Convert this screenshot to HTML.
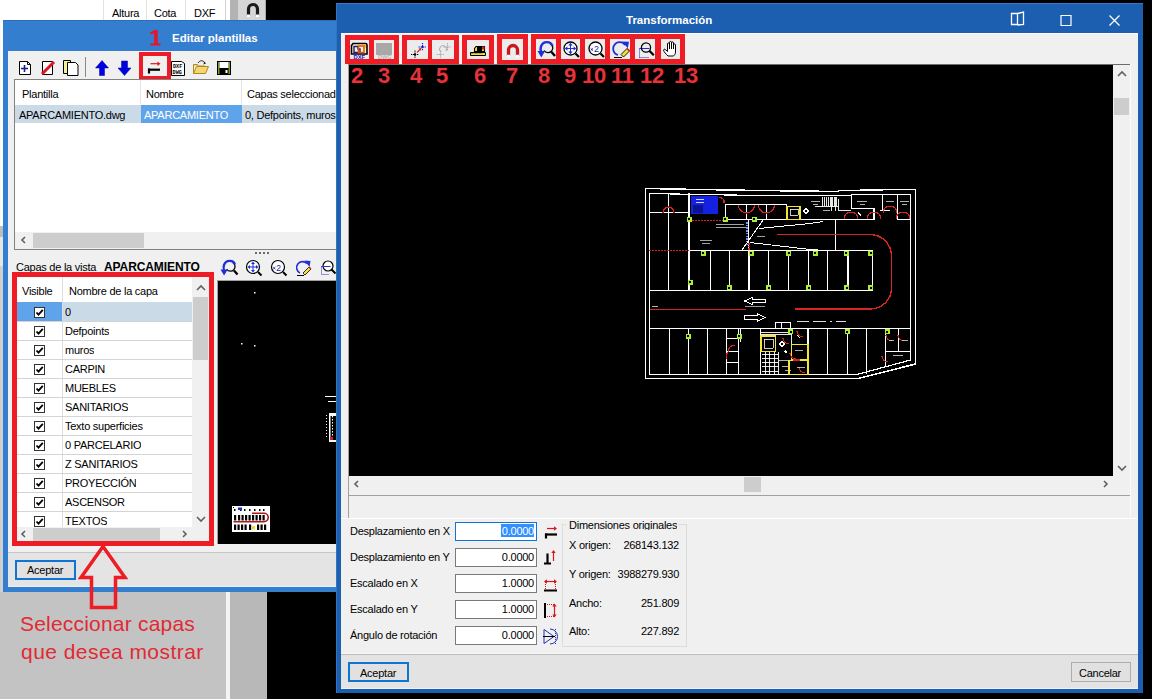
<!DOCTYPE html>
<html><head><meta charset="utf-8">
<style>
*{margin:0;padding:0;box-sizing:border-box}
html,body{width:1152px;height:699px;overflow:hidden;background:#000;font-family:"Liberation Sans",sans-serif;font-size:11px;color:#000}
.a{position:absolute}
.t{position:absolute;white-space:nowrap;line-height:13px;letter-spacing:-0.25px}
</style></head><body>
<!-- ===== background app ===== -->
<div class="a" style="left:0;top:0;width:230px;height:20px;background:#fff"></div>
<div class="a" style="left:103px;top:0;width:1px;height:20px;background:#e3e3e3"></div>
<div class="a" style="left:146px;top:0;width:1px;height:20px;background:#e3e3e3"></div>
<div class="a" style="left:185px;top:0;width:1px;height:20px;background:#e3e3e3"></div>
<div class="a" style="left:225px;top:0;width:1px;height:20px;background:#d0d0d0"></div>
<div class="t" style="left:112px;top:7px">Altura</div>
<div class="t" style="left:154px;top:7px">Cota</div>
<div class="t" style="left:194px;top:7px">DXF</div>
<div class="a" style="left:230px;top:0;width:8px;height:20px;background:#b3b3b3"></div>
<div class="a" style="left:238px;top:0;width:28px;height:20px;background:#d6d6d6;border-right:1px solid #aaa"></div>
<div class="a" style="left:0;top:20px;width:3px;height:206px;background:#fbfbfb"></div>
<div class="a" style="left:0;top:226px;width:3px;height:11px;background:#bdbdbd"></div>
<div class="a" style="left:0;top:237px;width:3px;height:29px;background:#e6e6e6"></div>
<div class="a" style="left:0;top:266px;width:3px;height:326px;background:#cfcfcf"></div>
<div class="a" style="left:0;top:592px;width:226px;height:107px;background:#c3c3c3"></div>
<div class="a" style="left:226px;top:592px;width:4px;height:107px;background:#f4f4f4"></div>
<div class="a" style="left:230px;top:592px;width:37px;height:107px;background:#b8b8b8"></div>

<!-- ===== left window ===== -->
<div class="a" id="lw" style="left:3px;top:20px;width:340px;height:572px;background:#347ecf;border-top:1px solid #2a6cbd"></div>
<div class="a" style="left:8px;top:51px;width:330px;height:536px;background:#f0f0f0"></div>


<!-- left toolbar -->
<svg class="a" style="left:14px;top:54px" width="220" height="26" viewBox="0 0 220 26">
 <!-- new doc + -->
 <path d="M5.5 7.5h8l3 3v10h-11z" fill="#fff" stroke="#000"/>
 <path d="M13.5 7.5v3h3" fill="none" stroke="#000"/>
 <path d="M7 14.5h7M10.5 11v7" stroke="#1a1a8c" stroke-width="1.6"/>
 <!-- doc w red -->
 <path d="M28.5 7.5h10v13h-10z" fill="#fff" stroke="#000"/>
 <path d="M28 20L40 8" stroke="#e0141c" stroke-width="3"/>
 <!-- copy -->
 <path d="M49.5 6.5h7v13h-7z" fill="#f4f09a" stroke="#000"/>
 <path d="M53.5 8.5h8l2.5 2.5v10.5h-10.5z" fill="#fff" stroke="#000"/>
 <!-- sep -->
 <path d="M71.5 3v20" stroke="#888"/>
 <!-- up arrow -->
 <path d="M88 6.5L94.5 14h-4v7.5h-5V14h-4z" fill="#0000e0" stroke="#0000a0" stroke-width=".5"/>
 <!-- down arrow -->
 <path d="M107.5 7h6v7h3.5l-6.5 7.5L104 14h3.5z" fill="#0000e0" stroke="#0000a0" stroke-width=".5"/>
 <!-- dxf dwg -->
 <path d="M157.5 7.5h10l3 2v12h-13z" fill="#fff" stroke="#000"/>
 <text x="159" y="13.6" font-size="5.2" font-weight="bold" font-family="Liberation Mono">DXF</text>
 <text x="158.6" y="19.6" font-size="5.2" font-weight="bold" font-family="Liberation Mono">DWG</text>
 <!-- folder -->
 <path d="M179.5 12v7.5h12l3-7h-12l-3 7M179.5 12v-1.5h4l1 1.5h6v1" fill="#f6d66e" stroke="#b08a20"/>
 <path d="M184 9c2-3 5-3 7 0" fill="none" stroke="#222" stroke-width="1"/>
 <path d="M190 7.5l2 2-2.5 1z" fill="#222"/>
 <!-- save -->
 <rect x="203" y="7" width="14" height="14" fill="#000"/>
 <rect x="204" y="8" width="1.5" height="12" fill="#7a9b2c"/>
 <rect x="214.5" y="8" width="1.5" height="12" fill="#7a9b2c"/>
 <rect x="205.5" y="8" width="9" height="6" fill="#fff"/>
 <rect x="211.5" y="16" width="2" height="3" fill="#fff"/>
</svg>
<!-- red box 1 -->
<div class="a" style="left:139px;top:52px;width:32px;height:28px;border:4.5px solid #ee1c24"></div>
<svg class="a" style="left:143px;top:56px" width="24" height="20" viewBox="0 0 24 20">
 <path d="M7.5 7.7h8" stroke="#e0141c" stroke-width="1.2"/><path d="M14.5 5.5l3 2.2-3 2.2z" fill="#e0141c"/>
 <path d="M5 13.7h12" stroke="#000" stroke-width="2.2"/><path d="M6 12.5v5" stroke="#000" stroke-width="2.2"/>
</svg>
<svg class="a" style="left:148px;top:28px" width="14" height="19" viewBox="0 0 14 19"><path d="M6.5 2h3.2v13.5h2.8V17.5H2.5v-2h3.6V5.2L2.6 6.6 2 4.5z" fill="#e4162a"/></svg>
<div class="t" style="left:172px;top:32px;color:#fff;font-weight:bold;font-size:11.5px;letter-spacing:0">Editar plantillas</div>

<!-- list view -->
<div class="a" style="left:14px;top:79px;width:330px;height:171px;background:#fff;border:1px solid #828282"></div>
<div class="a" style="left:140px;top:80px;width:1px;height:24px;background:#e5e5e5"></div>
<div class="a" style="left:241px;top:80px;width:1px;height:24px;background:#e5e5e5"></div>
<div class="t" style="left:22px;top:88px">Plantilla</div>
<div class="t" style="left:146px;top:88px">Nombre</div>
<div class="t" style="left:247px;top:88px">Capas seleccionadas</div>
<div class="a" style="left:15px;top:105px;width:322px;height:18px;background:#cbdae7"></div>
<div class="a" style="left:141px;top:105px;width:101px;height:18px;background:#5fa4ea"></div>
<div class="t" style="left:19px;top:109px">APARCAMIENTO.dwg</div>
<div class="t" style="left:144px;top:109px;color:#fff">APARCAMIENTO</div>
<div class="t" style="left:245px;top:109px">0, Defpoints, muros, CARPIN</div>
<!-- hscroll -->
<div class="a" style="left:15px;top:232px;width:322px;height:17px;background:#f0f0f0"></div>
<div class="a" style="left:33px;top:233px;width:111px;height:15px;background:#cdcdcd"></div>
<svg class="a" style="left:18px;top:234px" width="12" height="12"><path d="M7 3L4 6l3 3" fill="none" stroke="#606060" stroke-width="1.6"/></svg>
<!-- splitter dots -->
<svg class="a" style="left:254px;top:251px" width="16" height="4"><g fill="#6a6a6a"><rect x="1" y="1" width="2" height="2"/><rect x="5" y="1" width="2" height="2"/><rect x="9" y="1" width="2" height="2"/><rect x="13" y="1" width="2" height="2"/></g></svg>
<div class="t" style="left:16px;top:261px">Capas de la vista</div>
<div class="t" style="left:104px;top:261px;font-weight:bold;font-size:12px;letter-spacing:-0.1px">APARCAMIENTO</div>


<!-- layer list -->
<div class="a" style="left:12px;top:272px;width:202px;height:274px;background:#ee1c24"></div>
<div class="a" style="left:17px;top:277px;width:192px;height:264px;background:#fff;overflow:hidden">
</div>
<div class="a" style="left:62px;top:277px;width:1px;height:250px;background:#dedede"></div>
<div class="t" style="left:22px;top:285px">Visible</div>
<div class="t" style="left:69px;top:285px">Nombre de la capa</div>
<div class="a" style="left:17px;top:302px;width:45px;height:19px;background:#5fa4ea"></div>
<div class="a" style="left:63px;top:302px;width:129px;height:19px;background:#cbdae7"></div>
<div class="a" style="left:17px;top:321px;width:175px;height:1px;background:#d4d4d4"></div>
<div class="a" style="left:34px;top:307px;width:11px;height:11px;border:1px solid #333;background:#fff"></div>
<svg class="a" style="left:35px;top:308px" width="9" height="9"><path d="M1.5 4.5l2 2.2L7.8 1.8" fill="none" stroke="#000" stroke-width="1.8"/></svg>
<div class="t" style="left:65px;top:306px;max-width:79px;overflow:hidden">0</div>
<div class="a" style="left:17px;top:340px;width:175px;height:1px;background:#d4d4d4"></div>
<div class="a" style="left:34px;top:326px;width:11px;height:11px;border:1px solid #333;background:#fff"></div>
<svg class="a" style="left:35px;top:327px" width="9" height="9"><path d="M1.5 4.5l2 2.2L7.8 1.8" fill="none" stroke="#000" stroke-width="1.8"/></svg>
<div class="t" style="left:65px;top:325px;max-width:79px;overflow:hidden">Defpoints</div>
<div class="a" style="left:17px;top:359px;width:175px;height:1px;background:#d4d4d4"></div>
<div class="a" style="left:34px;top:345px;width:11px;height:11px;border:1px solid #333;background:#fff"></div>
<svg class="a" style="left:35px;top:346px" width="9" height="9"><path d="M1.5 4.5l2 2.2L7.8 1.8" fill="none" stroke="#000" stroke-width="1.8"/></svg>
<div class="t" style="left:65px;top:344px;max-width:79px;overflow:hidden">muros</div>
<div class="a" style="left:17px;top:378px;width:175px;height:1px;background:#d4d4d4"></div>
<div class="a" style="left:34px;top:364px;width:11px;height:11px;border:1px solid #333;background:#fff"></div>
<svg class="a" style="left:35px;top:365px" width="9" height="9"><path d="M1.5 4.5l2 2.2L7.8 1.8" fill="none" stroke="#000" stroke-width="1.8"/></svg>
<div class="t" style="left:65px;top:363px;max-width:79px;overflow:hidden">CARPIN</div>
<div class="a" style="left:17px;top:397px;width:175px;height:1px;background:#d4d4d4"></div>
<div class="a" style="left:34px;top:383px;width:11px;height:11px;border:1px solid #333;background:#fff"></div>
<svg class="a" style="left:35px;top:384px" width="9" height="9"><path d="M1.5 4.5l2 2.2L7.8 1.8" fill="none" stroke="#000" stroke-width="1.8"/></svg>
<div class="t" style="left:65px;top:382px;max-width:79px;overflow:hidden">MUEBLES</div>
<div class="a" style="left:17px;top:416px;width:175px;height:1px;background:#d4d4d4"></div>
<div class="a" style="left:34px;top:402px;width:11px;height:11px;border:1px solid #333;background:#fff"></div>
<svg class="a" style="left:35px;top:403px" width="9" height="9"><path d="M1.5 4.5l2 2.2L7.8 1.8" fill="none" stroke="#000" stroke-width="1.8"/></svg>
<div class="t" style="left:65px;top:401px;max-width:79px;overflow:hidden">SANITARIOS</div>
<div class="a" style="left:17px;top:435px;width:175px;height:1px;background:#d4d4d4"></div>
<div class="a" style="left:34px;top:421px;width:11px;height:11px;border:1px solid #333;background:#fff"></div>
<svg class="a" style="left:35px;top:422px" width="9" height="9"><path d="M1.5 4.5l2 2.2L7.8 1.8" fill="none" stroke="#000" stroke-width="1.8"/></svg>
<div class="t" style="left:65px;top:420px;max-width:79px;overflow:hidden">Texto superficies</div>
<div class="a" style="left:17px;top:454px;width:175px;height:1px;background:#d4d4d4"></div>
<div class="a" style="left:34px;top:440px;width:11px;height:11px;border:1px solid #333;background:#fff"></div>
<svg class="a" style="left:35px;top:441px" width="9" height="9"><path d="M1.5 4.5l2 2.2L7.8 1.8" fill="none" stroke="#000" stroke-width="1.8"/></svg>
<div class="t" style="left:65px;top:439px;max-width:79px;overflow:hidden">0 PARCELARIO</div>
<div class="a" style="left:17px;top:473px;width:175px;height:1px;background:#d4d4d4"></div>
<div class="a" style="left:34px;top:459px;width:11px;height:11px;border:1px solid #333;background:#fff"></div>
<svg class="a" style="left:35px;top:460px" width="9" height="9"><path d="M1.5 4.5l2 2.2L7.8 1.8" fill="none" stroke="#000" stroke-width="1.8"/></svg>
<div class="t" style="left:65px;top:458px;max-width:79px;overflow:hidden">Z SANITARIOS</div>
<div class="a" style="left:17px;top:492px;width:175px;height:1px;background:#d4d4d4"></div>
<div class="a" style="left:34px;top:478px;width:11px;height:11px;border:1px solid #333;background:#fff"></div>
<svg class="a" style="left:35px;top:479px" width="9" height="9"><path d="M1.5 4.5l2 2.2L7.8 1.8" fill="none" stroke="#000" stroke-width="1.8"/></svg>
<div class="t" style="left:65px;top:477px;max-width:79px;overflow:hidden">PROYECCIÓN</div>
<div class="a" style="left:17px;top:511px;width:175px;height:1px;background:#d4d4d4"></div>
<div class="a" style="left:34px;top:497px;width:11px;height:11px;border:1px solid #333;background:#fff"></div>
<svg class="a" style="left:35px;top:498px" width="9" height="9"><path d="M1.5 4.5l2 2.2L7.8 1.8" fill="none" stroke="#000" stroke-width="1.8"/></svg>
<div class="t" style="left:65px;top:496px;max-width:79px;overflow:hidden">ASCENSOR</div>
<div class="a" style="left:17px;top:530px;width:175px;height:1px;background:#d4d4d4"></div>
<div class="a" style="left:34px;top:516px;width:11px;height:11px;border:1px solid #333;background:#fff"></div>
<svg class="a" style="left:35px;top:517px" width="9" height="9"><path d="M1.5 4.5l2 2.2L7.8 1.8" fill="none" stroke="#000" stroke-width="1.8"/></svg>
<div class="t" style="left:65px;top:515px;max-width:79px;overflow:hidden">TEXTOS</div>

<!-- vscroll -->
<div class="a" style="left:192px;top:277px;width:17px;height:250px;background:#f0f0f0"></div>
<div class="a" style="left:193px;top:297px;width:15px;height:63px;background:#cdcdcd"></div>
<svg class="a" style="left:194px;top:282px" width="14" height="12"><path d="M3 8l4-4 4 4" fill="none" stroke="#606060" stroke-width="1.6"/></svg>
<svg class="a" style="left:194px;top:513px" width="14" height="12"><path d="M3 4l4 4 4-4" fill="none" stroke="#606060" stroke-width="1.6"/></svg>
<!-- hscroll -->
<div class="a" style="left:17px;top:527px;width:192px;height:14px;background:#f0f0f0"></div>
<div class="a" style="left:33px;top:528px;width:127px;height:13px;background:#cdcdcd"></div>
<svg class="a" style="left:18px;top:528px" width="12" height="12"><path d="M7 3L4 6l3 3" fill="none" stroke="#606060" stroke-width="1.6"/></svg>
<svg class="a" style="left:178px;top:528px" width="12" height="12"><path d="M5 3l3 3-3 3" fill="none" stroke="#606060" stroke-width="1.6"/></svg>

<!-- preview canvas -->
<div class="a" style="left:217px;top:280px;width:125px;height:264px;background:#000;border-left:1px solid #a0a0a0;border-top:1px solid #a0a0a0"></div>
<!-- sep + button -->
<div class="a" style="left:8px;top:552px;width:330px;height:1px;background:#c6c6c6"></div>
<div class="a" style="left:8px;top:553px;width:330px;height:34px;background:#e4e4e4"></div>
<div class="a" style="left:8px;top:586px;width:330px;height:1px;background:#e4f0fa"></div>
<div class="a" style="left:15px;top:560px;width:61px;height:20px;border:2px solid #0f74d4;background:#e1e1e1"></div>
<div class="t" style="left:27px;top:564px">Aceptar</div>


<!-- small zoom icons (left window) -->
<svg class="a" style="left:219px;top:258px" width="120" height="20" viewBox="0 0 120 20">
 <!-- 8 -->
 <g transform="translate(1,1)">
  <path d="M12.5 3.5a4.6 4.6 0 1 1-5.8 6.8" fill="none" stroke="#000" stroke-width="1.3"/>
  <path d="M14 11.5l3.5 4" stroke="#000" stroke-width="2.3"/>
  <path d="M15 5.5C13.5 0.8 6 0.5 4 6 3.3 8 3.5 9.5 4 11" fill="none" stroke="#1f2fd6" stroke-width="2.3"/>
  <path d="M0.5 10.5l3.6 6 3.6-6z" fill="#1f2fd6"/>
 </g>
 <!-- 9 -->
 <g transform="translate(26,1)">
  <circle cx="8" cy="8" r="6.5" fill="#fff" stroke="#000" stroke-width="1.2"/>
  <path d="M13 13l3.5 3.5" stroke="#000" stroke-width="2"/>
  <path d="M8 2.5l2 2.5h-4zM8 13.5l2-2.5h-4zM2.5 8l2.5-2v4zM13.5 8l-2.5-2v4z" fill="#1f2fd6"/>
  <path d="M8 4v8M4 8h8" stroke="#1f2fd6" stroke-width="1"/>
 </g>
 <!-- 10 -->
 <g transform="translate(51,1)">
  <circle cx="8" cy="8" r="6.5" fill="#fff" stroke="#000" stroke-width="1.2"/>
  <path d="M13 13l3.5 3.5" stroke="#000" stroke-width="2"/>
  <path d="M3.2 8l2.2 2.2M5.4 8l-2.2 2.2" stroke="#1a1ab0" stroke-width=".9"/><text x="6.3" y="11.7" font-size="8.5" font-family="Liberation Sans" fill="#1a1ab0">2</text>
 </g>
 <!-- 11 -->
 <g transform="translate(76,1)">
  <path d="M12 4.5A6 6 0 1 0 5 14" fill="none" stroke="#1f2fd6" stroke-width="1.6"/>
  <path d="M9.5 1.5l6 .5-1 6z" fill="#1f2fd6"/>
  <path d="M8 14l6-6 2 2-6 6z" fill="#f0e040" stroke="#000" stroke-width=".8"/>
  <path d="M14 8l2 2" stroke="#d02020" stroke-width="1.5"/>
  <path d="M2 16.5h7" stroke="#000" stroke-width="1"/>
 </g>
 <!-- 12 -->
 <g transform="translate(101,1)">
  <circle cx="8" cy="7" r="5" fill="#fff" stroke="#000" stroke-width="1.2"/>
  <path d="M11.5 10.5l4 4" stroke="#000" stroke-width="2"/>
  <path d="M1.5 7.5v8h8" fill="none" stroke="#3030d0" stroke-width="1" stroke-dasharray="1 1"/>
  <path d="M1.5 7.5h9" stroke="#3030d0" stroke-width="1"/>
 </g>
</svg>
<!-- preview content -->
<svg class="a" style="left:218px;top:281px" width="118" height="263" viewBox="0 0 118 263">
 <rect x="36" y="11" width="1.5" height="1.5" fill="#fff"/>
 <rect x="23" y="62" width="1.5" height="1.5" fill="#fff"/>
 <rect x="36" y="64" width="1.5" height="1.5" fill="#fff"/>
 <g transform="translate(14,225)"><rect x="0" y="0" width="38" height="26" fill="#fff"/><rect x="2" y="3" width="1.5" height="2" fill="#000"/><rect x="8" y="3" width="1.5" height="2" fill="#000"/><rect x="12" y="3" width="1.5" height="2" fill="#000"/><rect x="17" y="3" width="1.5" height="2" fill="#000"/><rect x="22" y="3" width="1.5" height="2" fill="#000"/><rect x="27" y="3" width="1.5" height="2" fill="#000"/><rect x="31" y="3" width="1.5" height="2" fill="#000"/><rect x="6" y="1.5" width="4" height="2.5" fill="#1a2ae0"/><path d="M20 7.3H32a4.2 4.2 0 0 1 0 8.4H1.5" fill="none" stroke="#b01818" stroke-width="1.6"/><rect x="2" y="9" width="2.2" height="5.5" fill="#000"/><rect x="6" y="9" width="2.2" height="5.5" fill="#000"/><rect x="9.5" y="9" width="2.2" height="5.5" fill="#000"/><rect x="13" y="9" width="2.2" height="5.5" fill="#000"/><rect x="16.5" y="9" width="2.2" height="5.5" fill="#000"/><rect x="20" y="9" width="2.2" height="5.5" fill="#000"/><rect x="23.5" y="9" width="2.2" height="5.5" fill="#000"/><rect x="27" y="9" width="2.2" height="5.5" fill="#000"/><rect x="30.5" y="9" width="2.2" height="5.5" fill="#000"/><rect x="2" y="18.5" width="2.2" height="5.5" fill="#000"/><rect x="5.5" y="18.5" width="2.2" height="5.5" fill="#000"/><rect x="9" y="18.5" width="2.2" height="5.5" fill="#000"/><rect x="12.5" y="18.5" width="2.2" height="5.5" fill="#000"/><rect x="17" y="18.5" width="2.2" height="5.5" fill="#000"/><rect x="25" y="18.5" width="2.2" height="5.5" fill="#000"/><rect x="28.5" y="18.5" width="2.2" height="5.5" fill="#000"/><rect x="32" y="18.5" width="2.2" height="5.5" fill="#000"/><rect x="20" y="20" width="3" height="3.5" fill="#e8e030"/><rect x="1" y="1" width="1" height="1" fill="#000"/></g>
 <g transform="translate(107,112)">
  <path d="M0 3.5h11M3 8.5h8" stroke="#fff" stroke-width="1"/>
  <rect x="4" y="20" width="8" height="29" fill="#fff"/>
  <rect x="5.5" y="23" width="6" height="24" fill="#000"/>
  <path d="M7.5 23v22" stroke="#fff" stroke-width="1" stroke-dasharray="1.5 1.5"/>
  <path d="M1.5 22v24" stroke="#fff" stroke-width="1" stroke-dasharray="1 2"/>
  <rect x="5" y="44" width="3" height="3" fill="#d02020"/>
 </g>
</svg>
<!-- magnet icon top bar -->
<svg class="a" style="left:244px;top:1px" width="18" height="18" viewBox="0 0 18 18">
 <path d="M4.5 15V8a4.5 4.5 0 0 1 9 0v7" fill="none" stroke="#1a1a1a" stroke-width="3.2"/>
 <path d="M3 13.5h3v2.5H3zM12 13.5h3v2.5h-3z" fill="#fff"/>
</svg>
<!-- arrow annotation -->
<svg class="a" style="left:70px;top:540px" width="70" height="75" viewBox="0 0 70 75">
 <path d="M33 6.5L55 37.5H45.5V67.5H21.5V37.5H11z" fill="none" stroke="#ee1c24" stroke-width="3.5" stroke-linejoin="miter"/>
</svg>
<div class="t" style="left:20px;top:611px;color:#e12a33;font-size:21px;line-height:26px;letter-spacing:.2px">Seleccionar capas</div>
<div class="t" style="left:21px;top:639px;color:#e12a33;font-size:21px;line-height:26px;letter-spacing:.45px">que desea mostrar</div>

<!-- ===== transformation window ===== -->
<div class="a" id="tw" style="left:336px;top:3px;width:807px;height:690px;background:#1c5fb1;border-top:1px solid #3876c6;border-left:1px solid #3274c4"></div>
<div class="a" style="left:341px;top:33px;width:797px;height:656px;background:#f0f0f0"></div>
<div class="t" style="left:626px;top:14px;color:#fff;font-weight:bold;font-size:11.5px;letter-spacing:0">Transformación</div>
<!-- canvas -->
<div class="a" style="left:348px;top:64px;width:782px;height:431px;background:#f0f0f0;border-top:1px solid #6d6d6d;border-left:1px solid #a0a0a0"></div>
<div class="a" style="left:349px;top:65px;width:764px;height:411px;background:#000"></div>
<div class="a" style="left:348px;top:495px;width:782px;height:23px;background:#f0f0f0;border-top:1px solid #a0a0a0;border-left:1px solid #a0a0a0;border-bottom:1px solid #fff"></div>

<!-- title buttons -->
<svg class="a" style="left:1005px;top:8px" width="125" height="22" viewBox="0 0 125 22">
 <path d="M6.5 5.5h6v11h-6zM12.5 5.5l6-1.5v12.5l-6 .5" fill="none" stroke="#fff" stroke-width="1.3"/>
 <path d="M56 7.5h10v10H56z" fill="none" stroke="#fff" stroke-width="1.2"/>
 <path d="M104.5 7.5l10 10M114.5 7.5l-10 10" stroke="#fff" stroke-width="1.3"/>
</svg>
<div class="a" style="left:341px;top:33px;width:797px;height:1px;background:#fbfbfb"></div>
<!-- toolbar red groups -->
<div class="a" style="left:345px;top:35px;width:54px;height:29px;background:#ee1c24"></div>
<div class="a" style="left:402px;top:35px;width:57px;height:29px;background:#ee1c24"></div>
<div class="a" style="left:462px;top:35px;width:32px;height:29px;background:#ee1c24"></div>
<div class="a" style="left:497px;top:34px;width:31px;height:30px;background:#ee1c24"></div>
<div class="a" style="left:531px;top:34px;width:154px;height:30px;background:#ee1c24"></div>
<div class="a" style="left:350px;top:40px;width:19px;height:19px;background:#ececec"></div>
<div class="a" style="left:374px;top:40px;width:20px;height:19px;background:#ececec"></div>
<div class="a" style="left:407px;top:40px;width:21px;height:19px;background:#ececec"></div>
<div class="a" style="left:432px;top:40px;width:22px;height:19px;background:#ececec"></div>
<div class="a" style="left:467px;top:40px;width:22px;height:19px;background:#ececec"></div>
<div class="a" style="left:502px;top:39px;width:21px;height:21px;background:#ececec"></div>
<div class="a" style="left:536px;top:39px;width:20px;height:20px;background:#ececec"></div>
<div class="a" style="left:561px;top:39px;width:19px;height:20px;background:#ececec"></div>
<div class="a" style="left:585px;top:39px;width:20px;height:20px;background:#ececec"></div>
<div class="a" style="left:610px;top:39px;width:20px;height:20px;background:#ececec"></div>
<div class="a" style="left:635px;top:39px;width:20px;height:20px;background:#ececec"></div>
<div class="a" style="left:661px;top:39px;width:19px;height:20px;background:#ececec"></div>
<svg class="a" style="left:345px;top:34px" width="340" height="30" viewBox="0 0 340 30">
 <!-- 2 DXF -->
 <g transform="translate(5,6)">
  <path d="M3 3.5h12.5a1.5 1.5 0 0 1 1.5 1.5v9H1.5V5.5z" fill="#fdf3c0" stroke="#000" stroke-width="1.6"/>
  <path d="M13 4.5h3v4z" fill="#f0c040"/>
  <path d="M4 6.5h4v2.5h2v3.5H4z" fill="none" stroke="#1a1a90" stroke-width="1.4"/>
  <path d="M8.5 6h5.5v6.5H8.5z" fill="none" stroke="#e05010" stroke-width="1.5"/>
  <text x="3.5" y="18.8" font-size="5.8" font-weight="bold" font-family="Liberation Sans" fill="#1010d0">DXF</text>
 </g>
 <!-- 3 gray -->
 <g transform="translate(30,6)">
  <path d="M1 3h16v12H1z" fill="#a8a8a8"/>
  <text x="3" y="18.5" font-size="5.5" font-weight="bold" font-family="Liberation Sans" fill="#b0b0b0">DWG</text>
 </g>
 <!-- 4 -->
 <g transform="translate(57,0)">
  <path d="M9 20.5h8M13 16.5v8" stroke="#000" stroke-width="1.1" stroke-dasharray="1.3 .7"/>
  <rect x="12" y="19.5" width="2" height="2" fill="#000"/>
  <path d="M16.5 13h8M20.5 9v8" stroke="#1818d8" stroke-width="1.1" stroke-dasharray="1.3 .7"/>
  <rect x="19.5" y="12" width="2" height="2" fill="#1818d8"/>
  <path d="M15 18.5l3.5-3.5" stroke="#d02020" stroke-width="1.1"/><path d="M19.5 14l-.6 2.8-2.2-2.2z" fill="#d02020"/>
 </g>
 <!-- 5 -->
 <g transform="translate(82,0)">
  <path d="M9.5 20.5h8M13.5 16.5v8" stroke="#a8a8a8" stroke-width="1.1" stroke-dasharray="1.3 .7"/>
  <path d="M16.5 13h8M20.5 9v8" stroke="#a8a8a8" stroke-width="1.1" stroke-dasharray="1.3 .7"/>
  <path d="M14 18a3.5 3.5 0 1 1 5-1" fill="none" stroke="#a8a8a8" stroke-width="1"/>
 </g>
 <!-- 6 -->
 <g transform="translate(124,9)">
  <path d="M1.5 9.5h15v3h-15z" fill="#f0e030" stroke="#000" stroke-width="1"/>
  <path d="M3 9.5v1.5M5 9.5v1M7 9.5v1.5M9 9.5v1M11 9.5v1.5M13 9.5v1" stroke="#000" stroke-width=".6"/>
  <path d="M5.5 5.5l1.5-2h8.5v5H5.5z" fill="#f0e030" stroke="#000" stroke-width="1.1"/>
  <path d="M8 3.5h5v5H8z" fill="#000"/><path d="M13 3.5h2.5v3H13z" fill="#c03020"/>
 </g>
 <!-- 7 magnet -->
 <g transform="translate(160,9)">
  <path d="M3.5 13V7a4.5 4.5 0 0 1 9 0v6" fill="none" stroke="#d0141c" stroke-width="3.3"/>
  <path d="M2 11.8h3.2v2.4H2zM10.8 11.8H14v2.4h-3.2z" fill="#fff"/>
 </g>
 <!-- 8 -->
 <g transform="translate(192,6)">
  <path d="M13 3.5a4.8 4.8 0 1 1-6 7" fill="none" stroke="#000" stroke-width="1.3"/>
  <path d="M14.5 12l3.5 4" stroke="#000" stroke-width="2.4"/>
  <path d="M15.5 6C14 1 6 0.5 4 6.5 3.3 8.5 3.5 10 4 11.5" fill="none" stroke="#1f2fd6" stroke-width="2.4"/>
  <path d="M0.5 11l3.8 6.5 3.8-6.5z" fill="#1f2fd6"/>
 </g>
 <!-- 9 -->
 <g transform="translate(217,6)">
  <circle cx="8.5" cy="8.5" r="6.5" fill="#fff" stroke="#000" stroke-width="1.3"/>
  <path d="M13.5 13.5l3.5 3.5" stroke="#000" stroke-width="2.2"/>
  <path d="M8.5 2.8l2.2 2.6h-4.4zM8.5 14.2l2.2-2.6h-4.4zM2.8 8.5l2.6-2.2v4.4zM14.2 8.5l-2.6-2.2v4.4z" fill="#1f2fd6"/>
  <path d="M8.5 4.5v8M4.5 8.5h8" stroke="#1f2fd6" stroke-width="1"/>
 </g>
 <!-- 10 -->
 <g transform="translate(242,6)">
  <circle cx="8.5" cy="8.5" r="6.5" fill="#fff" stroke="#000" stroke-width="1.3"/>
  <path d="M13.5 13.5l3.5 3.5" stroke="#000" stroke-width="2.2"/>
  <path d="M3.6 8.3l2.4 2.4M6 8.3l-2.4 2.4" stroke="#1a1ab0" stroke-width=".9"/><text x="7" y="12.3" font-size="9" font-family="Liberation Sans" fill="#1a1ab0">2</text>
 </g>
 <!-- 11 -->
 <g transform="translate(267,6)">
  <path d="M13 5A6.5 6.5 0 1 0 6 15" fill="none" stroke="#1f2fd6" stroke-width="1.7"/>
  <path d="M10 1.5l7 .3-1.2 6.5z" fill="#1f2fd6"/>
  <path d="M9 14.5l6-6 2.5 2.5-6 6z" fill="#f0e040" stroke="#000" stroke-width=".9"/>
  <path d="M15 8.5l2.5 2.5" stroke="#d02020" stroke-width="1.6"/>
  <path d="M2 17.5h8" stroke="#000" stroke-width="1"/>
 </g>
 <!-- 12 -->
 <g transform="translate(292,6)">
  <path d="M2.5 8.5v9M2.5 17.5h9" fill="none" stroke="#2828d8" stroke-width="1" stroke-dasharray="1 1"/>
  <path d="M2.5 8.5h10" stroke="#2828d8" stroke-width="1"/>
  <circle cx="9" cy="7.5" r="4.6" fill="none" stroke="#000" stroke-width="1.3"/>
  <path d="M12.3 10.8l4.5 4.5" stroke="#000" stroke-width="2.3"/>
 </g>
 <!-- 13 hand -->
 <g transform="translate(317,6)">
  <path d="M6 16c-2-2-4-4-4.5-6 .5-1 1.5-1 2.5 0l1.5 1.5V4c0-1.5 2-1.5 2 0v5V2.5c0-1.5 2-1.5 2 0V9V3c0-1.5 2-1.5 2 0v6V5c0-1.5 2-1.5 2 0v7c0 2-1 3-2 4z" fill="#fff" stroke="#000" stroke-width="1"/>
 </g>
</svg>
<!-- floor plan -->
<svg class="a" style="left:349px;top:65px" width="764" height="411" viewBox="349 65 764 411" shape-rendering="crispEdges"><path d="M645.5 188.5L700 189.5L760 190.5L838.5 191.5V190.5L882.5 190V189.5H915.5V364L858 378.5H645.5Z" stroke="#ffffff" stroke-width="1.5" fill="none" /><path d="M649.5 193.5L700 194.5L760 195.5L851.5 195.5V194.5H910.5V360L857 374.5H649.5Z" stroke="#ffffff" stroke-width="1.2" fill="none" /><path d="M649 212.5L689 212.5" stroke="#ffffff" stroke-width="1" /><path d="M668.5 193L668.5 290.5" stroke="#ffffff" stroke-width="1" /><path d="M689 193L689 290.5" stroke="#ffffff" stroke-width="1.3" /><path d="M663 212.5A5.5 5.5 0 0 1 668.5 207M674 212.5A5.5 5.5 0 0 0 668.5 207" stroke="#d82424" stroke-width="1.1" fill="none" /><rect x="691" y="196" width="27" height="18" fill="#1422e0"/><path d="M696 199h8M696 202h8" stroke="#ffffff" stroke-width="0.8" fill="none" /><rect x="693" y="205" width="10" height="8" fill="#0a1490"/><path d="M719 198a4 4 0 0 1 5 5" stroke="#d82424" stroke-width="1.2" fill="none" /><path d="M725.5 219V204.5H786M725.5 219.5H875" stroke="#ffffff" stroke-width="1.2" fill="none" /><path d="M746.5 204L746.5 219.5" stroke="#ffffff" stroke-width="1" /><path d="M766.5 204L766.5 219.5" stroke="#ffffff" stroke-width="1" /><path d="M786 204L786 219.5" stroke="#ffffff" stroke-width="1" /><path d="M738.5 205A8 8 0 0 0 746.5 213M754.5 205A8 8 0 0 1 746.5 213" stroke="#d82424" stroke-width="1.1" fill="none" /><path d="M758.5 205A8 8 0 0 0 766.5 213M774.5 205A8 8 0 0 1 766.5 213" stroke="#d82424" stroke-width="1.1" fill="none" /><rect x="787" y="206.5" width="13" height="13" fill="none"/><path d="M787 206.5h13v13h-13z" stroke="#f0e838" stroke-width="1.4" fill="none" /><path d="M790 209h8v6h-8z" stroke="#ffffff" stroke-width="0.8" fill="none" /><path d="M806 213a2 2 0 1 1 .1 0" stroke="#ffffff" stroke-width="1.5" fill="none" /><path d="M822.5 197L822.5 206" stroke="#ffffff" stroke-width="0.9" /><path d="M824.5 197L824.5 206" stroke="#ffffff" stroke-width="0.9" /><path d="M826.5 197L826.5 206" stroke="#ffffff" stroke-width="0.9" /><path d="M828.5 197L828.5 206" stroke="#ffffff" stroke-width="0.9" /><path d="M830.5 197L830.5 206" stroke="#ffffff" stroke-width="0.9" /><path d="M832.5 197L832.5 206" stroke="#ffffff" stroke-width="0.9" /><path d="M834.5 197L834.5 206" stroke="#ffffff" stroke-width="0.9" /><path d="M836.5 197L836.5 206" stroke="#ffffff" stroke-width="0.9" /><path d="M815 206.5H838M831 197V210.5M835 197V210.5M838.5 199V210.5H851" stroke="#ffffff" stroke-width="0.9" fill="none" /><path d="M811 201H820M813 204H818M823 210H830" stroke="#dddddd" stroke-width="0.8" fill="none" /><path d="M851.5 195V208.5H874V219" stroke="#ffffff" stroke-width="1.2" fill="none" /><path d="M882.5 194L882.5 210" stroke="#ffffff" stroke-width="1" /><path d="M897.5 194L897.5 219.5" stroke="#ffffff" stroke-width="1" /><path d="M880 210.5H890" stroke="#ffffff" stroke-width="1" fill="none" /><path d="M897 219.5L911 219.5" stroke="#ffffff" stroke-width="1.2" /><path d="M844 219A7 7 0 0 1 851 212M858 219A7 7 0 0 0 851 212" stroke="#d82424" stroke-width="1.1" fill="none" /><path d="M867 219A7 7 0 0 1 874 212M881 219A7 7 0 0 0 874 212" stroke="#d82424" stroke-width="1.1" fill="none" /><path d="M883 213A7 7 0 0 1 890 206M897 213A7 7 0 0 0 890 206" stroke="#d82424" stroke-width="1.1" fill="none" /><path d="M896 219A7 7 0 0 1 903 212M910 219A7 7 0 0 0 903 212" stroke="#d82424" stroke-width="1.1" fill="none" /><path d="M857 201h10M860 204h5M886 201h8M900 201h9M902 204h5" stroke="#dddddd" stroke-width="0.8" fill="none" /><path d="M858 212l3 4" stroke="#ffffff" stroke-width="1.3" fill="none" /><path d="M689 250.5L873 250.5" stroke="#ffffff" stroke-width="1.3" /><path d="M649 290.5L873 290.5" stroke="#ffffff" stroke-width="1.3" /><path d="M649 250.5L689 250.5" stroke="#d82424" stroke-width="1" stroke-dasharray="1.5 1.5"/><path d="M689 220.5L725 220.5" stroke="#d82424" stroke-width="1" stroke-dasharray="1.5 1.5"/><path d="M748.5 219L748.5 250.5" stroke="#ffffff" stroke-width="1.2" /><path d="M747 222L747 245" stroke="#7090ff" stroke-width="1.5" stroke-dasharray="1.5 1.2"/><path d="M749 243L749 250" stroke="#d82424" stroke-width="1.2" stroke-dasharray="1.5 1"/><path d="M763.5 219.5L741.5 250.5" stroke="#ffffff" stroke-width="1" fill="none" /><path d="M759 228.5L810 223.5L823.5 221.5" stroke="#ffffff" stroke-width="1" fill="none" /><path d="M750 242.5L810 249.5L833 251" stroke="#ffffff" stroke-width="1" fill="none" /><path d="M835.5 219.5L835.5 250.5" stroke="#ffffff" stroke-width="1.2" /><path d="M716 224h28M716 227h30M700 240h12M702 243h8M757 236h8" stroke="#cccccc" stroke-width="0.8" fill="none" /><path d="M668.5 250.5L668.5 290.5" stroke="#ffffff" stroke-width="1.2" /><path d="M689 250.5L689 290.5" stroke="#ffffff" stroke-width="1.2" /><path d="M710.5 250.5L710.5 290.5" stroke="#ffffff" stroke-width="1.2" /><path d="M729.5 250.5L729.5 290.5" stroke="#ffffff" stroke-width="1.2" /><path d="M749 250.5L749 290.5" stroke="#ffffff" stroke-width="1.2" /><path d="M768.5 250.5L768.5 290.5" stroke="#ffffff" stroke-width="1.2" /><path d="M788.5 250.5L788.5 290.5" stroke="#ffffff" stroke-width="1.2" /><path d="M808.5 250.5L808.5 290.5" stroke="#ffffff" stroke-width="1.2" /><path d="M827.5 250.5L827.5 290.5" stroke="#ffffff" stroke-width="1.2" /><path d="M848 250.5L848 290.5" stroke="#ffffff" stroke-width="1.2" /><path d="M872.5 250.5L872.5 290.5" stroke="#ffffff" stroke-width="1.2" /><path d="M777 234.5H870A21.5 21.5 0 0 1 891.5 256V288A21 21 0 0 1 870.5 309H795" stroke="#d82424" stroke-width="1.4" fill="none" /><path d="M649.5 309.5L745.5 309.5" stroke="#d82424" stroke-width="1.4" /><path d="M652 306h6" stroke="#dddddd" stroke-width="0.8" fill="none" /><path d="M765.5 299.5H753L752.5 297.5L744.5 301L752.5 304.5L753 302.5H765.5Z" stroke="#ffffff" stroke-width="1" fill="none" /><path d="M744.5 315.5H757V313.5L765 317.5L757 321.5V319.5H744.5Z" stroke="#ffffff" stroke-width="1" fill="none" /><path d="M745 306.5L765 306.5" stroke="#bbbbbb" stroke-width="0.8" /><path d="M797 321.5h12M813 321.5h13M830 321.5h2M836 321.5h10" stroke="#dddddd" stroke-width="1" fill="none" /><path d="M649 328.5L911 328.5" stroke="#ffffff" stroke-width="1.3" /><path d="M669.5 328.5L669.5 374.5" stroke="#ffffff" stroke-width="1.2" /><path d="M688.5 328.5L688.5 374.5" stroke="#ffffff" stroke-width="1.2" /><path d="M707.5 328.5L707.5 374.5" stroke="#ffffff" stroke-width="1.2" /><path d="M726.5 328.5L726.5 374.5" stroke="#ffffff" stroke-width="1.2" /><path d="M738.5 328.5V374.5M726.5 338.5H738.5M726.5 351.5H738.5M726.5 362H738.5" stroke="#ffffff" stroke-width="1" fill="none" /><path d="M740 328.5V342" stroke="#ffffff" stroke-width="1" fill="none" /><path d="M728 352a7 7 0 0 1 7-7M728 352a7 7 0 0 0 -1 7" stroke="#d82424" stroke-width="1.1" fill="none" /><path d="M760.5 328.5L760.5 374.5" stroke="#ffffff" stroke-width="1.2" /><path d="M808 328.5L808 374.5" stroke="#ffffff" stroke-width="1.2" /><path d="M827.5 328.5L827.5 374" stroke="#ffffff" stroke-width="1.2" /><path d="M847.5 328.5L847.5 374" stroke="#ffffff" stroke-width="1.2" /><path d="M866.5 328.5L866.5 374" stroke="#ffffff" stroke-width="1.2" /><path d="M885.5 328.5V366M898.5 328.5V351M885.5 351.5H911" stroke="#ffffff" stroke-width="1.2" fill="none" /><path d="M775 328.5V322H790V328.5M781.5 322V328.5" stroke="#ffffff" stroke-width="1" fill="none" /><path d="M760.5 332.5H791M760.5 334.5H791M791.5 328.5V344" stroke="#ffffff" stroke-width="0.9" fill="none" /><path d="M762 354.0L778 354.0" stroke="#ffffff" stroke-width="0.9" /><path d="M762 358.3L778 358.3" stroke="#ffffff" stroke-width="0.9" /><path d="M762 362.6L778 362.6" stroke="#ffffff" stroke-width="0.9" /><path d="M762 366.9L778 366.9" stroke="#ffffff" stroke-width="0.9" /><path d="M762 371.2L778 371.2" stroke="#ffffff" stroke-width="0.9" /><path d="M765.0 352L765.0 374" stroke="#ffffff" stroke-width="0.9" /><path d="M769.5 352L769.5 374" stroke="#ffffff" stroke-width="0.9" /><path d="M774.0 352L774.0 374" stroke="#ffffff" stroke-width="0.9" /><path d="M778.5 352L778.5 374" stroke="#ffffff" stroke-width="0.9" /><path d="M779 360h10M782 366h8M785 370h6" stroke="#dddddd" stroke-width="0.8" fill="none" /><path d="M761 336h14.5v15.5h-14.5z" stroke="#f0e838" stroke-width="1.4" fill="none" /><path d="M764 339h9v9h-9z" stroke="#ffffff" stroke-width="0.8" fill="none" /><path d="M791.5 344.5h16.5v15h-16.5zM789 360.5h19v14h-19z" stroke="#f0e838" stroke-width="1.4" fill="none" /><rect x="793" y="358.5" width="7" height="2.5" fill="#d82424"/><path d="M797 331A6 6 0 0 0 803 337" stroke="#d82424" stroke-width="1.2" fill="none" /><path d="M783 338A6 6 0 0 0 789 344" stroke="#d82424" stroke-width="1.2" fill="none" /><path d="M790 353A6 6 0 0 0 796 359" stroke="#d82424" stroke-width="1.2" fill="none" /><path d="M799 367A6 6 0 0 0 805 373" stroke="#d82424" stroke-width="1.2" fill="none" /><path d="M886 335A6 6 0 0 0 892 341" stroke="#d82424" stroke-width="1.2" fill="none" /><path d="M898 335A6 6 0 0 0 904 341" stroke="#d82424" stroke-width="1.2" fill="none" /><path d="M882 356A6 6 0 0 0 888 362" stroke="#d82424" stroke-width="1.2" fill="none" /><path d="M782 346a2 2 0 1 1 .1 0M785 351l2 2" stroke="#ffffff" stroke-width="1.5" fill="none" /><path d="M797 335l3 3" stroke="#ffffff" stroke-width="1.3" fill="none" /><path d="M795 350h8M797 367h8M889 340h5M902 340h6M893 355h10" stroke="#dddddd" stroke-width="0.8" fill="none" /><rect x="686.5" y="216.5" width="5" height="5" fill="#a8f030"/><rect x="688" y="218" width="2" height="2" fill="#000"/><rect x="722.5" y="216.5" width="5" height="5" fill="#a8f030"/><rect x="724" y="218" width="2" height="2" fill="#000"/><rect x="751.5" y="216.5" width="5" height="5" fill="#a8f030"/><rect x="753" y="218" width="2" height="2" fill="#000"/><rect x="700.5" y="250.5" width="5" height="5" fill="#a8f030"/><rect x="702" y="252" width="2" height="2" fill="#000"/><rect x="748.5" y="250.5" width="5" height="5" fill="#a8f030"/><rect x="750" y="252" width="2" height="2" fill="#000"/><rect x="786.0" y="250.5" width="5" height="5" fill="#a8f030"/><rect x="787.5" y="252" width="2" height="2" fill="#000"/><rect x="812.5" y="250.5" width="5" height="5" fill="#a8f030"/><rect x="814" y="252" width="2" height="2" fill="#000"/><rect x="843.5" y="250.5" width="5" height="5" fill="#a8f030"/><rect x="845" y="252" width="2" height="2" fill="#000"/><rect x="868.0" y="250.5" width="5" height="5" fill="#a8f030"/><rect x="869.5" y="252" width="2" height="2" fill="#000"/><rect x="687.5" y="279.5" width="5" height="5" fill="#a8f030"/><rect x="689" y="281" width="2" height="2" fill="#000"/><rect x="726.5" y="285.0" width="5" height="5" fill="#a8f030"/><rect x="728" y="286.5" width="2" height="2" fill="#000"/><rect x="766.0" y="285.0" width="5" height="5" fill="#a8f030"/><rect x="767.5" y="286.5" width="2" height="2" fill="#000"/><rect x="806.0" y="285.0" width="5" height="5" fill="#a8f030"/><rect x="807.5" y="286.5" width="2" height="2" fill="#000"/><rect x="844.0" y="285.0" width="5" height="5" fill="#a8f030"/><rect x="845.5" y="286.5" width="2" height="2" fill="#000"/><rect x="868.0" y="285.0" width="5" height="5" fill="#a8f030"/><rect x="869.5" y="286.5" width="2" height="2" fill="#000"/><rect x="685.5" y="333.5" width="5" height="5" fill="#a8f030"/><rect x="687" y="335" width="2" height="2" fill="#000"/><rect x="736.5" y="333.5" width="5" height="5" fill="#a8f030"/><rect x="738" y="335" width="2" height="2" fill="#000"/><rect x="788.3" y="329.0" width="5" height="5" fill="#a8f030"/><rect x="789.8" y="330.5" width="2" height="2" fill="#000"/><rect x="844.5" y="329.0" width="5" height="5" fill="#a8f030"/><rect x="846" y="330.5" width="2" height="2" fill="#000"/><rect x="884.5" y="329.0" width="5" height="5" fill="#a8f030"/><rect x="886" y="330.5" width="2" height="2" fill="#000"/></svg>
<!-- numbers -->
<div class="t" style="left:351px;top:65px;color:#e8323a;font-weight:bold;font-size:22px;line-height:22px">2</div>
<div class="t" style="left:378px;top:65px;color:#e8323a;font-weight:bold;font-size:22px;line-height:22px">3</div>
<div class="t" style="left:410px;top:65px;color:#e8323a;font-weight:bold;font-size:22px;line-height:22px">4</div>
<div class="t" style="left:436px;top:65px;color:#e8323a;font-weight:bold;font-size:22px;line-height:22px">5</div>
<div class="t" style="left:474px;top:65px;color:#e8323a;font-weight:bold;font-size:22px;line-height:22px">6</div>
<div class="t" style="left:506px;top:65px;color:#e8323a;font-weight:bold;font-size:22px;line-height:22px">7</div>
<div class="t" style="left:538px;top:65px;color:#e8323a;font-weight:bold;font-size:22px;line-height:22px">8</div>
<div class="t" style="left:564px;top:65px;color:#e8323a;font-weight:bold;font-size:22px;line-height:22px">9</div>
<div class="t" style="left:582px;top:65px;color:#e8323a;font-weight:bold;font-size:22px;line-height:22px">10</div>
<div class="t" style="left:611px;top:65px;color:#e8323a;font-weight:bold;font-size:22px;line-height:22px">11</div>
<div class="t" style="left:640px;top:65px;color:#e8323a;font-weight:bold;font-size:22px;line-height:22px">12</div>
<div class="t" style="left:674px;top:65px;color:#e8323a;font-weight:bold;font-size:22px;line-height:22px">13</div>
<!-- v scroll -->
<div class="a" style="left:1113px;top:65px;width:17px;height:411px;background:#f0f0f0"></div>
<div class="a" style="left:1114px;top:98px;width:15px;height:17px;background:#cdcdcd"></div>
<svg class="a" style="left:1115px;top:68px" width="14" height="12"><path d="M3 8l4-4 4 4" fill="none" stroke="#606060" stroke-width="1.6"/></svg>
<svg class="a" style="left:1115px;top:462px" width="14" height="12"><path d="M3 4l4 4 4-4" fill="none" stroke="#606060" stroke-width="1.6"/></svg>
<!-- h scroll -->
<div class="a" style="left:349px;top:476px;width:764px;height:18px;background:#f0f0f0"></div>
<div class="a" style="left:744px;top:477px;width:17px;height:15px;background:#cdcdcd"></div>
<svg class="a" style="left:351px;top:478px" width="12" height="12"><path d="M7 3L4 6l3 3" fill="none" stroke="#606060" stroke-width="1.6"/></svg>
<svg class="a" style="left:1099px;top:478px" width="12" height="12"><path d="M5 3l3 3-3 3" fill="none" stroke="#606060" stroke-width="1.6"/></svg>


<!-- form -->
<div class="t" style="left:350px;top:525px">Desplazamiento en X</div>
<div class="t" style="left:350px;top:551px">Desplazamiento en Y</div>
<div class="t" style="left:350px;top:577px">Escalado en X</div>
<div class="t" style="left:350px;top:603px">Escalado en Y</div>
<div class="t" style="left:350px;top:629px">Ángulo de rotación</div>
<div class="a" style="left:455px;top:522px;width:82px;height:19px;background:#fff;border:1px solid #0f74d4"></div>
<div class="a" style="left:501px;top:524px;width:33px;height:13px;background:#3390ff"></div>
<div class="t" style="left:455px;top:525px;width:79px;text-align:right;color:#fff">0.0000</div>
<div class="a" style="left:455px;top:548px;width:82px;height:19px;background:#fff;border:1px solid #7a7a7a"></div>
<div class="t" style="left:455px;top:551px;width:79px;text-align:right">0.0000</div>
<div class="a" style="left:455px;top:574px;width:82px;height:19px;background:#fff;border:1px solid #7a7a7a"></div>
<div class="t" style="left:455px;top:577px;width:79px;text-align:right">1.0000</div>
<div class="a" style="left:455px;top:600px;width:82px;height:19px;background:#fff;border:1px solid #7a7a7a"></div>
<div class="t" style="left:455px;top:603px;width:79px;text-align:right">1.0000</div>
<div class="a" style="left:455px;top:626px;width:82px;height:19px;background:#fff;border:1px solid #7a7a7a"></div>
<div class="t" style="left:455px;top:629px;width:79px;text-align:right">0.0000</div>
<!-- form icons -->
<svg class="a" style="left:541px;top:520px" width="20" height="130" viewBox="0 0 20 130">
 <g transform="translate(0,2)">
  <path d="M6 6.5h8" stroke="#e0141c" stroke-width="1.2"/><path d="M13 4.3l3 2.2-3 2.2z" fill="#e0141c"/>
  <path d="M4 12.5h12" stroke="#000" stroke-width="2.2"/><path d="M5 11.5v5" stroke="#000" stroke-width="2.2"/>
 </g>
 <g transform="translate(0,28)">
  <path d="M3 15.5h7M6.5 5.5v10" stroke="#000" stroke-width="2.2"/>
  <path d="M12.5 13V4" stroke="#e0141c" stroke-width="1.2"/><path d="M10.3 5l2.2-3 2.2 3z" fill="#e0141c"/>
 </g>
 <g transform="translate(0,54)">
  <path d="M3 16.5h13" stroke="#000" stroke-width="2"/>
  <path d="M4.5 8v7.5M14.5 8v7.5" stroke="#e0141c" stroke-width="1" stroke-dasharray="1 1"/>
  <path d="M5 7.5h9" stroke="#e0141c" stroke-width="1.2"/><path d="M6 5.3l-3 2.2 3 2.2zM13 5.3l3 2.2-3 2.2z" fill="#e0141c"/>
 </g>
 <g transform="translate(0,80)">
  <path d="M4 3v15" stroke="#000" stroke-width="2"/>
  <path d="M6 4.5h7M6 16.5h7" stroke="#e0141c" stroke-width="1" stroke-dasharray="1 1"/>
  <path d="M13.5 5.5v10" stroke="#e0141c" stroke-width="1.2"/><path d="M11.3 6.5l2.2-3 2.2 3zM11.3 14.5l2.2 3 2.2-3z" fill="#e0141c"/>
 </g>
 <g transform="translate(0,106)">
  <path d="M3 3.5l10 7-10 7z" fill="none" stroke="#2030b0" stroke-width="1"/>
  <path d="M2 10.5h12" stroke="#000" stroke-width="1"/>
  <path d="M9 3a7 7 0 0 1 0 15" fill="none" stroke="#2030b0" stroke-width="1"/>
  <path d="M14.5 3v15" stroke="#2030b0" stroke-width="1" stroke-dasharray="1 1"/>
 </g>
</svg>
<!-- group box -->
<div class="a" style="left:562px;top:524px;width:125px;height:123px;border:1px solid #dcdcdc"></div>
<div class="a" style="left:566px;top:518px;width:112px;height:12px;background:#f0f0f0"></div>
<div class="t" style="left:569px;top:518px;height:12px;overflow:hidden;line-height:14px">Dimensiones originales</div>
<div class="a" style="left:341px;top:518px;width:797px;height:1px;background:#fff"></div>
<div class="a" style="left:348px;top:495px;width:782px;height:23px;background:#f0f0f0;border-top:1px solid #a0a0a0;border-left:1px solid #a0a0a0"></div>
<div class="t" style="left:569px;top:539px">X origen:</div>
<div class="t" style="left:560px;top:539px;width:119px;text-align:right">268143.132</div>
<div class="t" style="left:569px;top:568px">Y origen:</div>
<div class="t" style="left:560px;top:568px;width:119px;text-align:right">3988279.930</div>
<div class="t" style="left:569px;top:597px">Ancho:</div>
<div class="t" style="left:560px;top:597px;width:119px;text-align:right">251.809</div>
<div class="t" style="left:569px;top:625px">Alto:</div>
<div class="t" style="left:560px;top:625px;width:119px;text-align:right">227.892</div>

<div class="a" style="left:1130px;top:64px;width:1px;height:454px;background:#fbfbfb"></div>
<!-- footer -->
<div class="a" style="left:341px;top:653px;width:797px;height:1px;background:#f6f6f6"></div>
<div class="a" style="left:341px;top:654px;width:797px;height:1px;background:#bdbdbd"></div>
<div class="a" style="left:341px;top:655px;width:797px;height:33px;background:#e3e3e3"></div>
<div class="a" style="left:341px;top:688px;width:797px;height:1px;background:#e9f3fb"></div>

<div class="a" style="left:348px;top:662px;width:61px;height:20px;border:2px solid #0f74d4;background:#e1e1e1"></div>
<div class="t" style="left:360px;top:667px">Aceptar</div>
<div class="a" style="left:1071px;top:662px;width:60px;height:20px;border:1px solid #adadad;background:#e1e1e1"></div>
<div class="t" style="left:1079px;top:667px">Cancelar</div>

</body></html>
